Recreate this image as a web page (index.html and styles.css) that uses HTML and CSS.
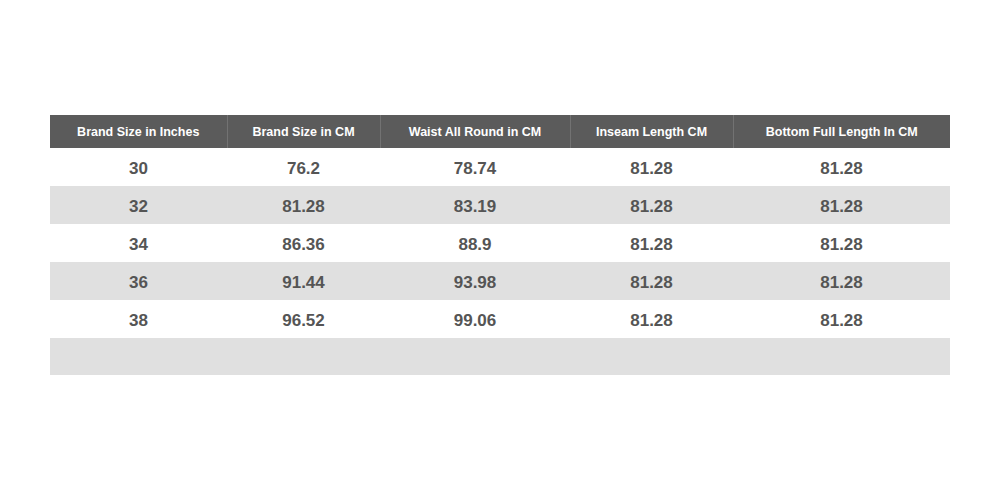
FILE: index.html
```html
<!DOCTYPE html>
<html>
<head>
<meta charset="utf-8">
<link rel="stylesheet" href="styles.css">
</head>
<body>
<div class="wrap">
<table class="size-table">
<colgroup>
<col class="c1"><col class="c2"><col class="c3"><col class="c4"><col class="c5">
</colgroup>
<thead>
<tr>
<th>Brand Size in Inches</th>
<th>Brand Size in CM</th>
<th>Waist All Round in CM</th>
<th>Inseam Length CM</th>
<th>Bottom Full Length In CM</th>
</tr>
</thead>
<tbody>
<tr><td>30</td><td>76.2</td><td>78.74</td><td>81.28</td><td>81.28</td></tr>
<tr class="alt"><td>32</td><td>81.28</td><td>83.19</td><td>81.28</td><td>81.28</td></tr>
<tr><td>34</td><td>86.36</td><td>88.9</td><td>81.28</td><td>81.28</td></tr>
<tr class="alt"><td>36</td><td>91.44</td><td>93.98</td><td>81.28</td><td>81.28</td></tr>
<tr><td>38</td><td>96.52</td><td>99.06</td><td>81.28</td><td>81.28</td></tr>
<tr class="alt last"><td></td><td></td><td></td><td></td><td></td></tr>
</tbody>
</table>
</div>
</body>
</html>
```
FILE: styles.css
```css
html, body {
  margin: 0;
  padding: 0;
  background: #ffffff;
}
.wrap {
  padding: 115px 50px 0 50px;
}
.size-table {
  width: 900px;
  border-collapse: collapse;
  table-layout: fixed;
  font-family: "Liberation Sans", Arial, sans-serif;
  font-weight: bold;
}
.c1 { width: 177px; }
.c2 { width: 153px; }
.c3 { width: 190px; }
.c4 { width: 163px; }
.c5 { width: 217px; }
.size-table th {
  background: #5b5b5b;
  color: #ffffff;
  font-size: 12.5px;
  height: 33px;
  padding: 0;
  text-align: center;
  vertical-align: middle;
  border-left: 1px solid #727272;
}
.size-table th:first-child {
  border-left: none;
}
.size-table td {
  color: #555555;
  font-size: 17px;
  height: 34px;
  padding: 4px 0 0 0;
  text-align: center;
  vertical-align: middle;
}
.size-table tr.alt td {
  background: #e0e0e0;
}
.size-table tr.last td {
  height: 33px;
}
```
